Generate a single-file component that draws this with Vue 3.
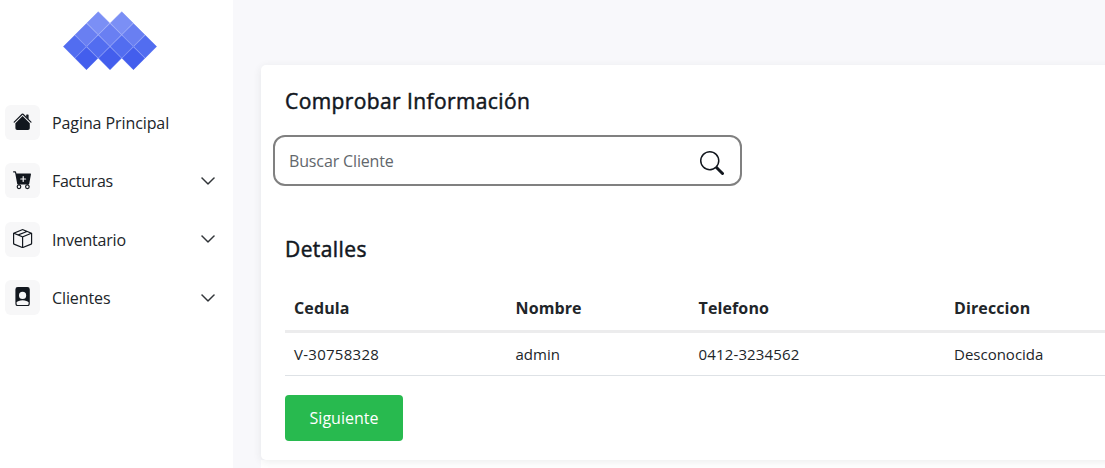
<script setup>
const tiles = [
  { y: 12, fill: '#7b8ff5', xs: [35, 58.4] },
  { y: 23.7, fill: '#697ff2', xs: [23.3, 46.7, 70] },
  { y: 35.3, fill: '#526df0', xs: [11.7, 35, 58.4, 81.7] },
  { y: 47, fill: '#435eed', xs: [23.3, 46.7, 70] }
]
const diamond = (x, y) => `${x},${y - 11.3} ${x + 11.3},${y} ${x},${y + 11.3} ${x - 11.3},${y}`

const menu = [
  {
    id: 'home', label: 'Pagina Principal', open: false,
    paths: [
      'm8 3.293 6 6V13.5a1.5 1.5 0 0 1-1.5 1.5h-9A1.5 1.5 0 0 1 2 13.5V9.293l6-6zm5-.793V6l-2-2V2.5a.5.5 0 0 1 .5-.5h1a.5.5 0 0 1 .5.5z',
      'M7.293 1.5a1 1 0 0 1 1.414 0l6.647 6.646a.5.5 0 0 1-.708.708L8 2.207 1.354 8.854a.5.5 0 1 1-.708-.708L7.293 1.5z'
    ]
  },
  {
    id: 'bills', label: 'Facturas', open: true,
    paths: [
      'M.5 1a.5.5 0 0 0 0 1h1.11l.401 1.607 1.498 7.985A.5.5 0 0 0 4 12h1a2 2 0 1 0 0 4 2 2 0 0 0 0-4h7a2 2 0 1 0 0 4 2 2 0 0 0 0-4h1a.5.5 0 0 0 .491-.408l1.5-8A.5.5 0 0 0 14.5 3H2.89l-.405-1.621A.5.5 0 0 0 2 1H.5zM6 14a1 1 0 1 1-2 0 1 1 0 0 1 2 0zm7 0a1 1 0 1 1-2 0 1 1 0 0 1 2 0zM9 5.5V7h1.5a.5.5 0 0 1 0 1H9v1.5a.5.5 0 0 1-1 0V8H6.5a.5.5 0 0 1 0-1H8V5.5a.5.5 0 0 1 1 0z'
    ]
  },
  {
    id: 'stock', label: 'Inventario', open: true,
    paths: [
      'M8.186 1.113a.5.5 0 0 0-.372 0L1.846 3.5l2.404.961L10.404 2l-2.218-.887zm3.564 1.426L5.596 5 8 5.961 14.154 3.5l-2.404-.961zm3.25 1.7-6.5 2.6v7.922l6.5-2.6V4.24zM7.5 14.762V6.838L1 4.239v7.923l6.5 2.6zM7.443.184a1.5 1.5 0 0 1 1.114 0l7.129 2.852A.5.5 0 0 1 16 3.5v8.662a1 1 0 0 1-.629.928l-7.185 2.874a.5.5 0 0 1-.372 0L.63 13.09a1 1 0 0 1-.63-.928V3.5a.5.5 0 0 1 .314-.464L7.443.184z'
    ]
  },
  {
    id: 'clients', label: 'Clientes', open: true,
    paths: [
      'M12 0H4a2 2 0 0 0-2 2v12a2 2 0 0 0 2 2h8a2 2 0 0 0 2-2V2a2 2 0 0 0-2-2zm-1 7a3 3 0 1 1-6 0 3 3 0 0 1 6 0zm-3 4c2.623 0 4.146.826 5 1.755V14a1 1 0 0 1-1 1H4a1 1 0 0 1-1-1v-1.245C3.854 11.825 5.377 11 8 11z'
    ]
  }
]
</script>

<template>
  <div class="page">
    <aside class="sidebar">
      <svg class="logo" width="94" height="60" viewBox="0 0 93.4 59.6">
        <template v-for="row in tiles" :key="row.y">
          <polygon v-for="x in row.xs" :key="x" :points="diamond(x, row.y)" :fill="row.fill" :stroke="row.fill" stroke-width=".5" stroke-linejoin="round" />
        </template>
      </svg>
      <nav class="menu">
        <a v-for="item in menu" :key="item.id" class="item" :class="item.id">
          <span class="tile">
            <svg class="icon" viewBox="0 0 16 16"><path v-for="d in item.paths" :key="d" :d="d" fill-rule="evenodd" /></svg>
          </span>
          <span class="label">{{ item.label }}</span>
          <svg v-if="item.open" class="chevron" viewBox="0 0 16 16">
            <path fill-rule="evenodd" d="M1.646 4.646a.5.5 0 0 1 .708 0L8 10.293l5.646-5.647a.5.5 0 0 1 .708.708l-6 6a.5.5 0 0 1-.708 0l-6-6a.5.5 0 0 1 0-.708z" />
          </svg>
        </a>
      </nav>
    </aside>
    <main class="content">
      <section class="card">
        <h5 class="title">Comprobar Información</h5>
        <div class="search">
          <span class="hint">Buscar Cliente</span>
          <svg class="glass" viewBox="0 0 16 16">
            <path d="M11.742 10.344a6.5 6.5 0 1 0-1.397 1.398h-.001c.03.04.062.078.098.115l3.85 3.85a1 1 0 0 0 1.415-1.414l-3.85-3.85a1.007 1.007 0 0 0-.115-.1zM12 6.5a5.5 5.5 0 1 1-11 0 5.5 5.5 0 0 1 11 0z" />
          </svg>
        </div>
        <h5 class="title second">Detalles</h5>
        <div class="table">
          <div class="row head">
            <span>Cedula</span><span>Nombre</span><span>Telefono</span><span>Direccion</span>
          </div>
          <div class="row body">
            <span class="cedula">V-30758328</span><span>admin</span><span class="phone">0412-3234562</span><span>Desconocida</span>
          </div>
        </div>
        <button class="next" type="button">Siguiente</button>
      </section>
      <section class="below"></section>
    </main>
  </div>
</template>

<style>
html, body { margin: 0; overflow: hidden; }
</style>
<style scoped>
* { box-sizing: border-box; }
.page { display: flex; width: 1105px; height: 468px; overflow: hidden; background: #f8f8fb; font-family: "Open Sans", "Noto Sans", sans-serif; color: #212529; }
.sidebar { flex: none; width: 233px; height: 468px; background: #fff; padding-top: 11px; }
.logo { display: block; margin-left: 63px; }
.menu { display: flex; flex-direction: column; gap: 23.4px; margin-top: 34px; padding: 0 17px 0 5px; }
.item { display: flex; align-items: center; height: 35px; }
.tile { display: flex; justify-content: center; width: 35px; height: 35px; padding: 7px 0 0 1px; border-radius: 6px; background: #f7f7f8; }
.icon { width: 19.2px; height: 19.2px; fill: #12171e; }
.label { margin-left: 12px; font-size: 16px; line-height: 24px; letter-spacing: -.2px; white-space: nowrap; }
.home .label { letter-spacing: -.09px; }
.bills .label { letter-spacing: -.33px; }
.clients .label { letter-spacing: -.1px; }
.stock .label { padding-top: 1px; }
.chevron { width: 16px; height: 16px; margin-left: auto; fill: #212529; stroke: #212529; stroke-width: .5; }
.content { flex: none; width: 900px; padding: 65px 0 0 28px; }
.card { position: relative; height: 395px; padding: 24px; border-radius: 5px; background: #fff; box-shadow: 0 2px 8px rgba(40, 60, 60, .09); }
.title { margin: 0; font-size: 21px; font-weight: 400; line-height: 24px; letter-spacing: .4px; color: #12171e; -webkit-text-stroke: .5px #12171e; }
.search { display: flex; align-items: center; justify-content: space-between; width: 469px; height: 51px; margin: 22px 0 0 -12px; padding: 0 16px 0 14px; border: 2px solid #808080; border-radius: 12px; }
.hint { font-size: 16px; letter-spacing: -.14px; color: #62676c; }
.glass { width: 24px; height: 24px; margin-top: 4px; fill: #12171e; }
.second { margin-top: 51px; }
.table { margin-top: 24px; }
.row { display: grid; grid-template-columns: 221.5px 183px 255.5px 1fr; padding-left: 9px; white-space: nowrap; }
.head { height: 48px; border-bottom: 3px solid #ececed; font-size: 16px; font-weight: 700; line-height: 46px; letter-spacing: .12px; }
.body { height: 43px; border-bottom: 1px solid #dee2e6; font-size: 15px; line-height: 42px; }
.cedula { letter-spacing: .27px; }
.phone { letter-spacing: .15px; }
.next { display: block; width: 118px; height: 46px; margin-top: 19px; padding: 0; border: 0; border-radius: 4px; background: #28ba4f; color: #fff; font: 400 16px/46px "Open Sans", "Noto Sans", sans-serif; }
.below { height: 20px; background: #fff; }
</style>
